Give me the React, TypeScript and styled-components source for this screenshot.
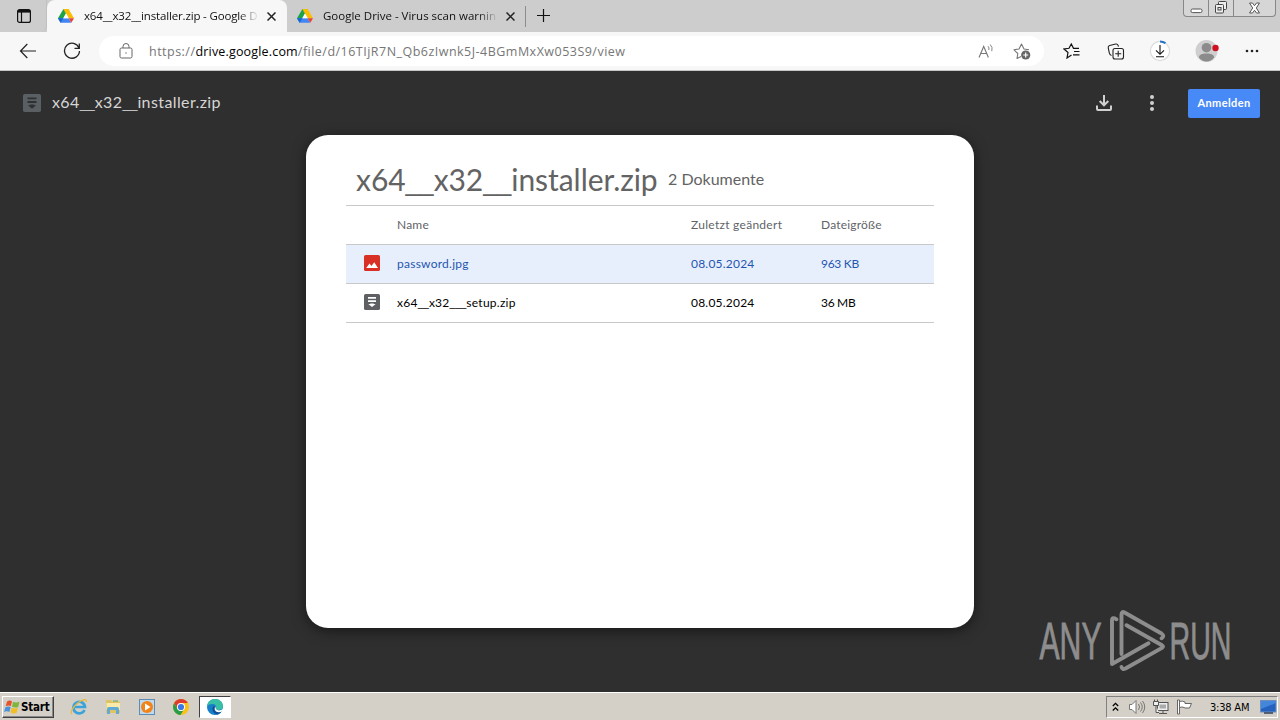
import React from "react";
import styled, { createGlobalStyle, css } from "styled-components";

const ui = `"Open Sans", "Noto Sans", sans-serif`;
const product = `Lato, "Open Sans", sans-serif`;
const classic = `"DejaVu Sans Condensed", "DejaVu Sans", sans-serif`;

interface FileEntry {
  name: string;
  modified: string;
  size: string;
  kind: "image" | "zip";
  selected?: boolean;
}

const files: FileEntry[] = [
  { name: "password.jpg", modified: "08.05.2024", size: "963 KB", kind: "image", selected: true },
  { name: "x64__x32___setup.zip", modified: "08.05.2024", size: "36 MB", kind: "zip" },
];

// Lato leaves gaps between underscores, so runs of them use another face
const FileName = ({ children }: { children: string }) => (
  <>
    {children.split(/(_+)/).map((part, i) =>
      part.startsWith("_") ? <Underscores key={i}>{part}</Underscores> : part
    )}
  </>
);

const DriveIcon = () => (
  <svg width="16" height="14" viewBox="0 0 16 14">
    <path d="M5.4 0h5.2L8 4.6z" fill="#188038" />
    <path d="M5.4 0L8 4.6 2.7 13.7 0 9.2z" fill="#1ea446" />
    <path d="M10.6 0L16 9.2h-5.3L5.4 0z" fill="#fbbc04" />
    <path d="M5.3 9.2H0l2.7 4.6h10.6l-2.7-4.6z" fill="#4285f4" />
    <path d="M10.7 9.2H16l-2.7 4.6z" fill="#ea4335" />
    <path d="M5.3 9.2H0l2.7 4.6z" fill="#1967d2" />
    <path d="M8 4.6l2.7 4.6H5.3z" fill="#fff" />
  </svg>
);

const CloseIcon = () => (
  <svg width="9" height="9" viewBox="0 0 9 9" stroke="#222" strokeWidth="1.5">
    <path d="M.5.5l8 8M8.5.5l-8 8" />
  </svg>
);

const ZipIcon = ({ size, fill, mark }: { size: number; fill: string; mark: string }) => (
  <svg width={size} height={size} viewBox="0 0 16 16">
    <rect width="16" height="16" rx="1.6" fill={fill} />
    <path d="M4 3h8v1.700H4zM4 6.200h8v1.700H4zM6.300 9.400h3.400v.7h2L8 13l-3.700-2.900h2z" fill={mark} />
  </svg>
);

const ImageIcon = () => (
  <svg width="16" height="16" viewBox="0 0 16 16">
    <rect width="16" height="16" rx="1.6" fill="#d93025" />
    <path d="M2.200 13l3.300-4.500 2 2.500 2.700-3.700L14 13z" fill="#fff" />
  </svg>
);

const App: React.FunctionComponent = () => {
  return (
    <>
      <GlobalStyle />
      <Screen>
        <TabStrip>
          <TabActions>
            <svg width="14" height="14" viewBox="0 0 14 14" fill="none" stroke="#111" strokeWidth="1.2">
              <rect x=".6" y=".6" width="12.800" height="12.800" rx="2" />
              <path d="M1 2.300h12" strokeWidth="2.600" />
              <path d="M4.500 3v10" />
            </svg>
          </TabActions>
          <Tab active>
            <DriveIcon />
            <TabTitle spacing={-0.15}>x64__x32__installer.zip - Google D</TabTitle>
            <CloseIcon />
          </Tab>
          <Tab>
            <DriveIcon />
            <TabTitle spacing={0}>Google Drive - Virus scan warnin</TabTitle>
            <CloseIcon />
          </Tab>
          <NewTab>
            <svg width="15" height="15" viewBox="0 0 15 15" stroke="#111" strokeWidth="1.2">
              <path d="M7.500 1v13M1 7.500h13" />
            </svg>
          </NewTab>
          <WindowButtons>
            <WindowButton width={24}>
              <svg width="13" height="6" viewBox="0 0 13 6">
                <rect x="1" y="1" width="11" height="3.600" rx="1.500" fill="#fff" stroke="#555" />
              </svg>
            </WindowButton>
            <WindowButton width={25}>
              <svg width="14" height="13" viewBox="0 0 14 13" fill="#eee" stroke="#444">
                <rect x="4.500" y=".5" width="8" height="8" rx="1" />
                <rect x="1.500" y="3.500" width="8" height="8.500" rx="1" />
                <rect x="4" y="6.500" width="3" height="2.500" />
              </svg>
            </WindowButton>
            <WindowButton width={42}>
              <svg width="13" height="12" viewBox="0 0 13 12">
                <path
                  d="M1.500 1h3l2 2.700L8.500 1h3L8.300 6l3.200 5h-3l-2-2.700L4.500 11h-3l3.200-5z"
                  fill="#fff"
                  stroke="#555"
                />
              </svg>
            </WindowButton>
          </WindowButtons>
        </TabStrip>

        <Toolbar>
          <ToolIcon left={19}>
            <svg width="18" height="16" viewBox="0 0 18 16" fill="none" stroke="#222" strokeWidth="1.200">
              <path d="M8.300 1L1.500 8l6.800 7M1.500 8H17" />
            </svg>
          </ToolIcon>
          <ToolIcon left={26}>
            <svg width="18" height="18" viewBox="0 0 18 18" fill="none" stroke="#222" strokeWidth="1.300">
              <path d="M16 6A7.500 7.500 0 1 0 16.500 9M16.300 1.500v4.800h-4.800" />
            </svg>
          </ToolIcon>
          <AddressBar>
            <svg width="14" height="16" viewBox="0 0 14 16" fill="none" stroke="#666" strokeWidth="1">
              <rect x="1" y="5" width="12" height="10" rx="1.500" />
              <path d="M4 5V3.500a3 3 0 0 1 6 0V5" />
              <circle cx="7" cy="10" r=".7" fill="#666" stroke="none" />
            </svg>
            <Url>
              https://<b>drive.google.com</b>/file/d/16TIjR7N_Qb6zIwnk5J-4BGmMxXw053S9/view
            </Url>
            <svg width="17" height="16" viewBox="0 0 17 16" fill="none" stroke="#777" strokeWidth="1.100">
              <path d="M1 14.500L5.700 3.500l4.700 11M2.700 10.500h6" />
              <path d="M10 3.200q1.500 1.600.8 3.800M12.200 1.500q2.800 2.800 1.600 6.700" strokeWidth=".9" />
            </svg>
            <StarAdd>
              <svg width="18" height="17" viewBox="0 0 18 17" fill="none" stroke="#777" strokeWidth="1.100">
                <path d="M8 13.500l-4 2 .8-5L1 6.800l5-.8L8.500 1 11 6l5 .8" strokeLinejoin="round" />
                <circle cx="12.700" cy="12" r="4.600" fill="#666" stroke="none" />
                <path d="M12.700 9.500v5M10.200 12h5" stroke="#fff" strokeWidth="1.200" />
              </svg>
            </StarAdd>
          </AddressBar>
          <ToolIcon left={19}>
            <svg width="17" height="16" viewBox="0 0 17 16" fill="none" stroke="#111" strokeWidth="1.200">
              <path d="M8.500 12L4 15l1-5.500L1 6l5-.7L8.300 1l2.200 4.300H16M11 8.500h5.500M10 11.800h6.500" />
            </svg>
          </ToolIcon>
          <ToolIcon left={27}>
            <svg width="18" height="17" viewBox="0 0 18 17" fill="none" stroke="#222" strokeWidth="1.100">
              <path d="M4.500 12.500C3 12 2.600 11 2.300 9.800L1.200 4.700Q1 3 2.700 2.500L8.700 1q1.700-.3 2.300 1.200l.5 1.500" />
              <rect x="6" y="5.500" width="10.500" height="10.500" rx="2" />
              <path d="M11.200 7.700v6M8.200 10.700h6" />
            </svg>
          </ToolIcon>
          <ToolIcon left={24}>
            <svg width="22" height="22" viewBox="0 0 22 22" fill="none">
              <circle cx="11" cy="11" r="9.600" fill="#fff" stroke="#dcdcdc" strokeWidth="1.200" />
              <path d="M11 1.400a9.600 9.600 0 0 1 5.500 1.700" stroke="#2674c4" strokeWidth="2" />
              <path d="M11 5v9M7 10.300l4 4 4-4M7 16.700h8" stroke="#111" strokeWidth="1.100" />
            </svg>
          </ToolIcon>
          <ToolIcon left={24}>
            <svg width="24" height="24" viewBox="0 0 24 24">
              <circle cx="11.500" cy="12" r="11" fill="#cfcfcf" />
              <circle cx="11.500" cy="8.700" r="4.800" fill="#8b8b8b" />
              <path d="M4 18.500c0-3 3-4 7.500-4s7.500 1 7.500 4c-1.600 2.600-4.600 4-7.500 4s-5.900-1.400-7.500-4z" fill="#8b8b8b" />
              <circle cx="20.500" cy="9" r="3.200" fill="#cf1020" />
            </svg>
          </ToolIcon>
          <ToolIcon left={26}>
            <svg width="14" height="4" viewBox="0 0 14 4" fill="#222">
              <circle cx="2" cy="2" r="1.300" />
              <circle cx="7" cy="2" r="1.300" />
              <circle cx="12" cy="2" r="1.300" />
            </svg>
          </ToolIcon>
        </Toolbar>

        <Viewer>
          <ViewerHeader>
            <ZipIcon size={18} fill="#5a5f64" mark="#2f3032" />
            <FileTitle>
              <FileName>x64__x32__installer.zip</FileName>
            </FileTitle>
            <svg width="18" height="18" viewBox="0 0 18 18" fill="none" stroke="#d0d0d0" strokeWidth="2">
              <path d="M9 1v10M4.700 7L9 11.300 13.300 7M2 11.500V15q0 1 1 1h12q1 0 1-1v-3.500" />
            </svg>
            <MoreIcon width="6" height="18" viewBox="0 0 6 18" fill="#d0d0d0">
              <circle cx="3" cy="3" r="2" />
              <circle cx="3" cy="9" r="2" />
              <circle cx="3" cy="15" r="2" />
            </MoreIcon>
            <SignIn>Anmelden</SignIn>
          </ViewerHeader>
          <Card>
            <Heading>
              <ArchiveName>
                <FileName>x64__x32__installer.zip</FileName>
              </ArchiveName>
              <Count>2 Dokumente</Count>
            </Heading>
            <Row head>
              <span />
              <Cell spacing={0.2}>Name</Cell>
              <Cell spacing={0.28}>Zuletzt geändert</Cell>
              <Cell spacing={0.2}>Dateigröße</Cell>
            </Row>
            {files.map((file) => (
              <Row key={file.name} selected={file.selected}>
                <KindIcon>
                  {file.kind === "image" ? <ImageIcon /> : <ZipIcon size={16} fill="#5f6064" mark="#fff" />}
                </KindIcon>
                <Cell spacing={0.25}>
                  <FileName>{file.name}</FileName>
                </Cell>
                <Cell spacing={0.22}>{file.modified}</Cell>
                <Cell spacing={-0.3}>{file.size}</Cell>
              </Row>
            ))}
          </Card>
          <Watermark width="245" height="66" viewBox="0 0 245 66">
            <g
              fill="#8d8d8d"
              stroke="#8d8d8d"
              strokeWidth=".9"
              fontFamily='"Liberation Sans Narrow", "Liberation Sans", sans-serif'
              fontSize="52"
            >
              <text x="4.500" y="50.500" textLength="62" lengthAdjust="spacingAndGlyphs">ANY</text>
              <text x="134.500" y="50.500" textLength="62" lengthAdjust="spacingAndGlyphs">RUN</text>
            </g>
            <g fill="none" stroke="#8d8d8d" strokeWidth="3.900" strokeLinejoin="round" strokeLinecap="round">
              <path d="M81.500 11.300Q77 8.500 77 12.500V56L113.500 35.300" />
              <path d="M86.500 46V6.500q0-3.500 3-2L126.500 25.500q3.500 2.500 0 4.800" />
              <path d="M91.500 17.300l35.500 20q2 1.200 0 2.600L90.500 60.500q-3.500 1.500-4-1.500" />
            </g>
          </Watermark>
        </Viewer>

        <Taskbar>
          <StartButton>
            <svg width="17" height="16" viewBox="0 0 17 16">
              <path d="M3 2.500Q5.500.8 8 2.200L6.900 7Q4.500 5.700 1.700 7.200z" fill="#e5532d" />
              <path d="M9 2.700q2.800 1.400 6.500 0L14.200 8q-3 1.200-6.200-.3z" fill="#7fb53c" />
              <path d="M1.400 8.200Q4.200 6.900 6.700 8.100L5.400 13Q2.800 11.600 0 13z" fill="#4d92d8" />
              <path d="M7.700 8.800q3 1.400 6.200.3l-1.300 5q-3.200 1.200-6.100-.5z" fill="#f3bd24" />
            </svg>
            Start
          </StartButton>
          <QuickLaunch>
            <svg width="18" height="18" viewBox="0 0 18 18" fill="none">
              <path d="M14.500 12A5.800 5.800 0 1 1 15 9H5" stroke="#3ba3dc" strokeWidth="2.700" />
              <path d="M2 16C-1 13 7 4 13 2q4-1 3.300 2" stroke="#e9b93b" strokeWidth="1.300" />
            </svg>
          </QuickLaunch>
          <QuickLaunch>
            <svg width="18" height="18" viewBox="0 0 18 18">
              <path d="M2 2h5l1 1.500h8V15H2z" fill="#e0c464" />
              <path d="M2.500 5H16v7H2.500z" fill="#f8eba9" />
              <path d="M3 16v-5q0-2 2-2h8q2 0 2 2v5h-3v-4H6v4z" fill="#5faad6" />
              <path d="M9 3h5" stroke="#5aa55a" />
            </svg>
          </QuickLaunch>
          <QuickLaunch>
            <svg width="18" height="18" viewBox="0 0 18 18">
              <rect x="1.500" y="1.500" width="15" height="15" fill="#c0d8ea" stroke="#5c8db6" />
              <circle cx="9" cy="9" r="6" fill="#f08418" />
              <path d="M7 5.500L12.500 9 7 12.500z" fill="#fff" />
            </svg>
          </QuickLaunch>
          <QuickLaunch>
            <svg width="18" height="18" viewBox="0 0 18 18">
              <circle cx="9" cy="9" r="8" fill="#fbc116" />
              <path d="M2.100 5A8 8 0 0 1 15.900 5H9a4 4 0 0 0-3.500 6z" fill="#dd3c30" />
              <path d="M2.100 5A8 8 0 0 0 8.500 17l3.700-6A4 4 0 0 1 5.500 11z" fill="#2a9d4b" />
              <circle cx="9" cy="9" r="4" fill="#fff" />
              <circle cx="9" cy="9" r="3.100" fill="#3b78e7" />
            </svg>
          </QuickLaunch>
          <QuickLaunch pressed>
            <svg width="18" height="18" viewBox="0 0 18 18">
              <circle cx="9" cy="9" r="8" fill="#1580c8" />
              <path d="M1 8.500C2 3 5.500 1 9 1c5 0 8 3.500 8 7 0 3-2.500 4-5 4-2 0-2.500-1-2-2 .8-2-1-4-3.500-4S2 6.800 1 8.500z" fill="#39bfa5" />
              <path d="M7 8.500c-2 4 1 7.500 4.500 8 2-.5 3.500-2 4.300-3.500-3 1.200-6.500.5-6.500-2.500 0-1 .5-1.500.5-2.500z" fill="#0d4f9a" />
              <path d="M9.500 8q-.5 4 3.500 4.500 2.500 0 4-2l-.7 2.700Q13 15 10 13.500 7.500 11 9.500 8z" fill="#fff" />
            </svg>
          </QuickLaunch>
          <Tray>
            <svg width="7" height="10" viewBox="0 0 7 10" fill="none" stroke="#000" strokeWidth="1.300">
              <path d="M.8 4l2.700-2.700L6.200 4M.8 8.500l2.700-2.700 2.700 2.700" />
            </svg>
            <TrayIcon left={9}>
              <svg width="18" height="16" viewBox="0 0 18 16" fill="none" stroke="#777" strokeWidth="1">
                <path d="M1.500 5.500H4L8 1.500v13l-4-4H1.500z" fill="#fff" />
                <path d="M10.500 5q2 3 0 6M12.500 3.500q3.500 4.500 0 9M14.500 2q4.500 6 0 12" />
              </svg>
            </TrayIcon>
            <TrayIcon left={6}>
              <svg width="17" height="16" viewBox="0 0 17 16" fill="#eee" stroke="#555" strokeWidth="1">
                <rect x="5.500" y="3.500" width="10.500" height="8" />
                <rect x="7.500" y="5.500" width="6.500" height="4" fill="#aaa" stroke="none" />
                <path d="M7 14.500h8M11 12v2M1.500 2.500h5v4h-5zM2.500.5v2M5.500.5v2M4 6.500v7h3" />
              </svg>
            </TrayIcon>
            <TrayIcon left={7}>
              <svg width="17" height="16" viewBox="0 0 17 16" fill="#fff" stroke="#666" strokeWidth="1">
                <path d="M1.500 1h2v14h-2z" />
                <path d="M3.500 2.500q3-1 5.500.5v1.500h6.500L13.500 9H9L8 8.500q-2-1-4.500 0z" />
              </svg>
            </TrayIcon>
            <Clock>3:38 AM</Clock>
            <svg width="17" height="14" viewBox="0 0 17 14">
              <rect x=".5" y=".5" width="15.500" height="11.500" fill="#2462bd" stroke="#6e8fbd" />
              <path d="M1 9L16 3V1H1z" fill="#4486da" />
              <path d="M4 13h9" stroke="#33415a" strokeWidth="1.500" />
            </svg>
          </Tray>
        </Taskbar>
      </Screen>
    </>
  );
};

export default App;

const GlobalStyle = createGlobalStyle`
  body {
    margin: 0;
    overflow: hidden;
  }
  * {
    box-sizing: border-box;
  }
  svg {
    flex-shrink: 0;
    display: block;
  }
`;

const Screen = styled.div`
  width: 1280px;
  height: 720px;
  display: flex;
  flex-direction: column;
  overflow: hidden;
  font-family: ${ui};
`;

const TabStrip = styled.div`
  height: 32px;
  display: flex;
  background: #cdcdcd;
`;

const TabActions = styled.div`
  width: 47px;
  padding: 9px 0 0 17px;
  border-bottom-right-radius: 6px;
  border-right: 1px solid #c0c0c0;
`;

const Tab = styled("div").withConfig({
  shouldForwardProp: (prop) => !["active"].includes(prop),
})<{ active?: boolean }>`
  display: flex;
  align-items: center;
  height: 32px;
  width: 239px;
  padding: 0 10px;
  border-right: 1px solid;
  border-image: linear-gradient(transparent 7px, #8c8c8c 7px, #8c8c8c 26px, transparent 26px) 1;
  ${({ active }) =>
    active &&
    css`
      width: 240px;
      padding: 0 11px;
      background: #f7f7f7;
      border: none;
      border-radius: 8px 8px 0 0;
    `}
`;

const TabTitle = styled("div").withConfig({
  shouldForwardProp: (prop) => !["spacing"].includes(prop),
})<{ spacing: number }>`
  flex: 1;
  margin: 0 8px 0 10px;
  white-space: nowrap;
  font-size: 11.5px;
  line-height: 18px;
  color: #111;
  letter-spacing: ${({ spacing }) => `${spacing}px`};
  mask-image: linear-gradient(to right, #000 calc(100% - 20px), transparent);
`;

const NewTab = styled.div`
  padding: 8px 0 0 10px;
`;

const WindowButtons = styled.div`
  display: flex;
  height: 17px;
  margin: 0 4px 0 auto;
  border: 1px solid #888;
  border-top: none;
  border-radius: 0 0 4px 4px;
  background: #d6d6d6;
`;

const WindowButton = styled("div").withConfig({
  shouldForwardProp: (prop) => !["width"].includes(prop),
})<{ width: number }>`
  display: flex;
  justify-content: center;
  align-items: flex-end;
  width: ${({ width }) => `${width}px`};
  padding-bottom: 2px;
  & + & {
    border-left: 1px solid #888;
  }
`;

const Toolbar = styled.div`
  height: 39px;
  display: flex;
  align-items: center;
  background: #f7f7f7;
  border-bottom: 1px solid #c6c6c6;
`;

const ToolIcon = styled("div").withConfig({
  shouldForwardProp: (prop) => !["left"].includes(prop),
})<{ left: number }>`
  margin-left: ${({ left }) => `${left}px`};
`;

const AddressBar = styled.div`
  display: flex;
  align-items: center;
  width: 945px;
  height: 30px;
  margin-left: 18px;
  padding: 0 13px 0 20px;
  border-radius: 15px;
  background: #fff;
`;

const Url = styled.div`
  flex: 1;
  margin-left: 16px;
  font-size: 12.5px;
  letter-spacing: 0.48px;
  white-space: nowrap;
  color: #767676;
  b {
    font-weight: 400;
    letter-spacing: 0.17px;
    color: #000;
  }
`;

const StarAdd = styled.div`
  margin-left: 18px;
`;

const Viewer = styled.main`
  position: relative;
  height: 621px;
  background: #2f2f2f;
`;

const ViewerHeader = styled.header`
  display: flex;
  align-items: center;
  height: 64px;
  padding: 0 20px 0 23px;
`;

const FileTitle = styled.div`
  flex: 1;
  margin-left: 11px;
  font-family: ${product};
  font-size: 16px;
  line-height: 20px;
  letter-spacing: 0.4px;
  color: #d6d6d6;
`;

const Underscores = styled.span`
  font-family: "Liberation Sans", sans-serif;
  font-size: 0.84em;
  letter-spacing: 0;
`;

const MoreIcon = styled.svg`
  margin: 0 33px 0 36px;
`;

const SignIn = styled.button`
  width: 72px;
  height: 29px;
  padding: 0 0 2px;
  border: none;
  border-radius: 2px;
  background: #4789f6;
  color: #fff;
  font-family: ${product};
  font-size: 11px;
  font-weight: 700;
  letter-spacing: 0.4px;
`;

const Card = styled.section`
  width: 668px;
  height: 493px;
  margin: 0 auto;
  padding: 20px 40px 0;
  border-radius: 22px;
  background: #fff;
  box-shadow: 0 3px 14px rgba(0, 0, 0, 0.5);
`;

const Heading = styled.div`
  display: flex;
  align-items: center;
  height: 50px;
  padding: 0 0 3px 10px;
  font-family: ${product};
  color: #636363;
  white-space: nowrap;
`;

const ArchiveName = styled.div`
  width: 312px;
  padding-top: 4px;
  font-size: 30px;
  line-height: 36px;
  letter-spacing: -0.05px;
`;

const Count = styled.div`
  font-size: 16px;
`;

const Row = styled("div").withConfig({
  shouldForwardProp: (prop) => !["head", "selected"].includes(prop),
})<{ head?: boolean; selected?: boolean }>`
  display: grid;
  grid-template-columns: 51px 294px 130px 1fr;
  align-items: center;
  height: 39px;
  border-bottom: 1px solid #c8c8c8;
  font-family: ${product};
  font-size: 12px;
  color: ${({ head, selected }) => (head ? "#5f6368" : selected ? "#1f56b0" : "#000")};
  background: ${({ selected }) => (selected ? "#e7effd" : "#fff")};
  ${({ head }) =>
    head &&
    css`
      height: 40px;
      border-top: 1px solid #c8c8c8;
    `}
`;

const Cell = styled("div").withConfig({
  shouldForwardProp: (prop) => !["spacing"].includes(prop),
})<{ spacing: number }>`
  padding-bottom: 2px;
  letter-spacing: ${({ spacing }) => `${spacing}px`};
`;

const KindIcon = styled.div`
  padding: 0 0 2px 18px;
`;

const Watermark = styled.svg`
  position: absolute;
  right: 0;
  bottom: 18px;
`;

const Taskbar = styled.footer`
  display: flex;
  align-items: center;
  height: 28px;
  padding: 2px 2px 1px;
  border-top: 1px solid #fff;
  background: #d4d0c8;
`;

const StartButton = styled.button`
  display: flex;
  align-items: center;
  width: 52px;
  height: 22px;
  margin-right: 8px;
  padding: 0 0 0 1px;
  border: 1px solid;
  border-color: #fff #404040 #404040 #fff;
  box-shadow: inset -1px -1px #888;
  background: #d4d0c8;
  color: #000;
  font-family: ${classic};
  font-size: 11.5px;
  font-weight: 700;
  letter-spacing: -0.2px;
`;

const QuickLaunch = styled("div").withConfig({
  shouldForwardProp: (prop) => !["pressed"].includes(prop),
})<{ pressed?: boolean }>`
  display: flex;
  align-items: center;
  justify-content: center;
  width: 34px;
  height: 22px;
  ${({ pressed }) =>
    pressed &&
    css`
      width: 32px;
      margin-left: 1px;
      border: 1px solid;
      border-color: #404040 #fff #fff #404040;
      background: #fff;
    `}
`;

const Tray = styled.div`
  display: flex;
  align-items: center;
  width: 172px;
  height: 22px;
  margin-left: auto;
  padding-left: 5px;
  border: 1px solid;
  border-color: #808080 #fff #fff #808080;
`;

const TrayIcon = styled("div").withConfig({
  shouldForwardProp: (prop) => !["left"].includes(prop),
})<{ left: number }>`
  margin-left: ${({ left }) => `${left}px`};
`;

const Clock = styled.div`
  width: 50px;
  margin-left: 17px;
  font-family: ${classic};
  font-size: 11px;
  letter-spacing: -0.2px;
  white-space: nowrap;
`;
